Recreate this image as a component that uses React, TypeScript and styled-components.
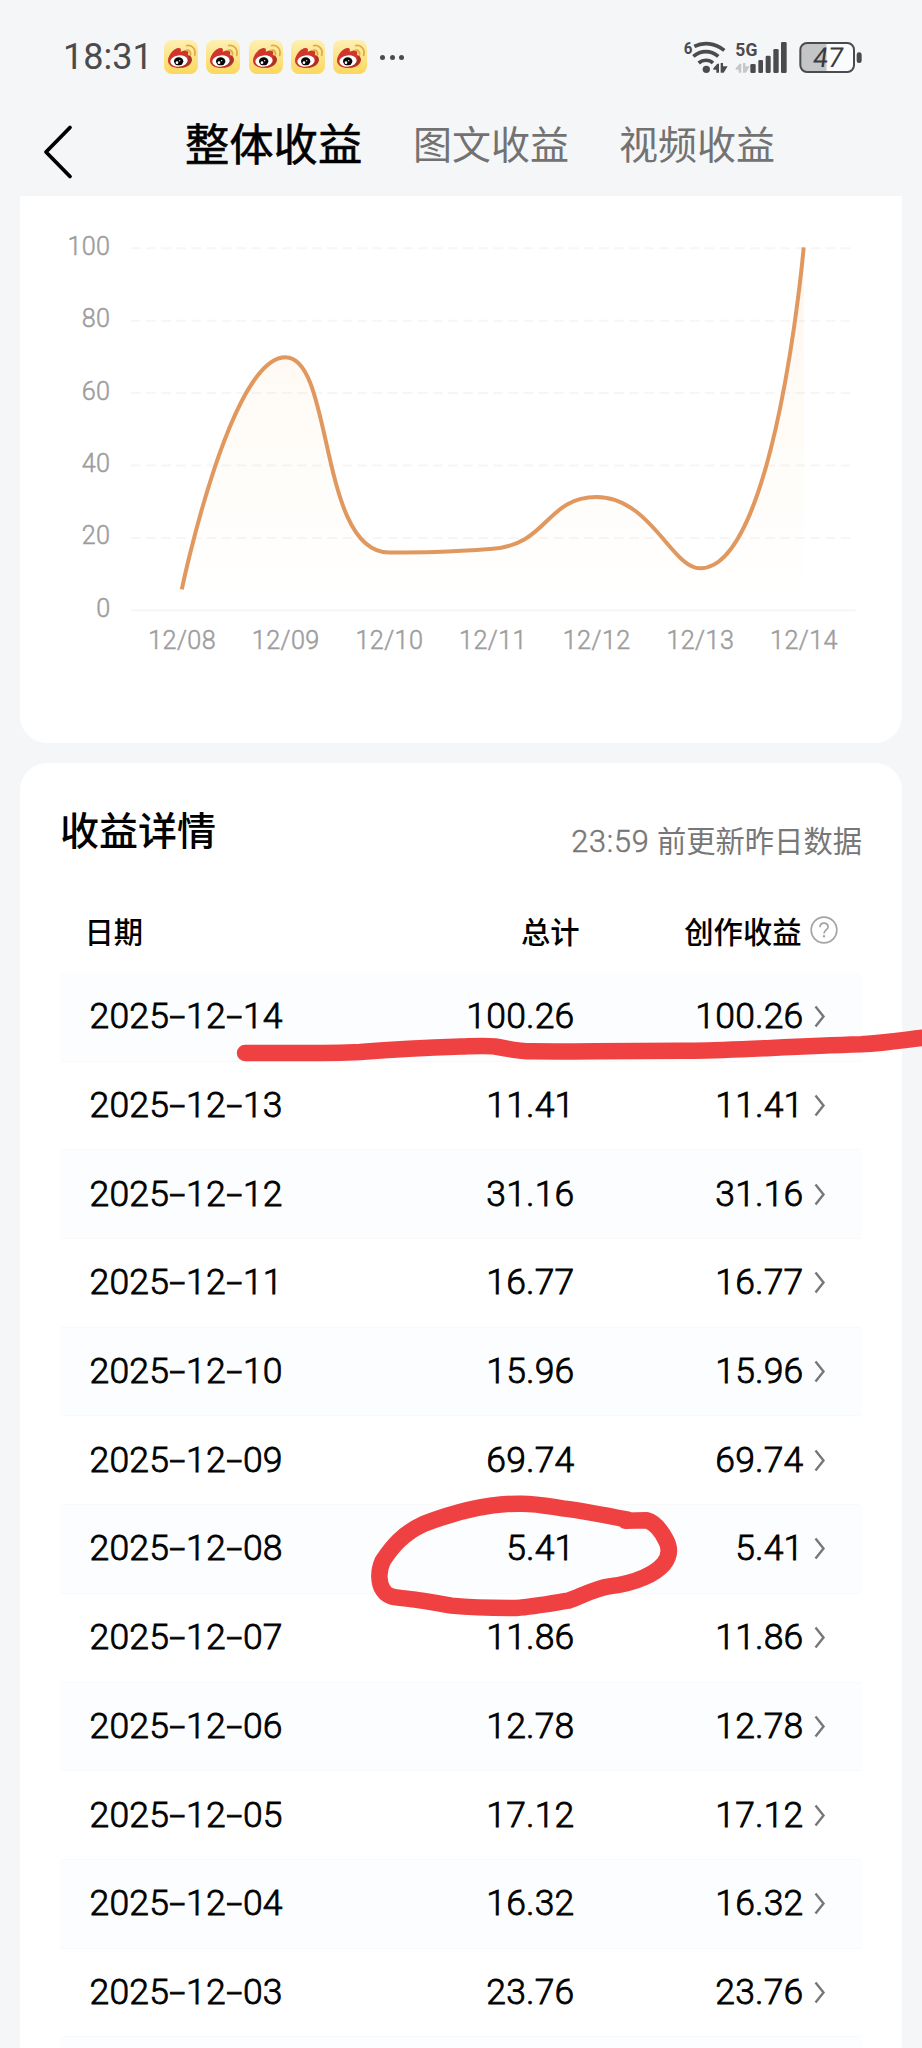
import React from 'react';
import styled, { createGlobalStyle, css } from 'styled-components';

const GlobalStyle = createGlobalStyle`
  html, body { margin: 0; padding: 0; background: #f5f6f8; }
  * { box-sizing: border-box; }
`;

const Page = styled.div`
  position: relative;
  width: 922px;
  height: 2048px;
  overflow: hidden;
  background: #f5f6f8;
  color: #000;
  font-family: Roboto, 'Noto Sans CJK SC', sans-serif;
`;

const StatusBar = styled.header`
  display: flex;
  align-items: center;
  height: 92px;
  padding: 22px 59px 0 63px;
`;

const Clock = styled.span`
  width: 101px;
  font-size: 36px;
  line-height: 40px;
  color: #4b4b4d;
  white-space: nowrap;
`;

const Notifications = styled.div`
  display: flex;
  align-items: center;
  gap: 8.3px;
`;

const MoreDots = styled.div`
  display: flex;
  gap: 4.6px;
  margin-left: 13px;
  span { width: 5px; height: 5px; border-radius: 50%; background: #4b4b4d; }
`;

const Indicators = styled.svg`
  display: block;
  margin-left: auto;
`;

const NavBar = styled.nav`
  display: flex;
  align-items: center;
  height: 104px;
  padding: 0 0 0 40px;
`;

const BackButton = styled.button`
  display: flex;
  padding: 16px 0 0;
  width: 145px;
  border: 0;
  background: none;
`;

const Tab = styled.span<{ $active?: boolean }>`
  white-space: nowrap;
  line-height: 60px;
  padding-top: 3px;
  ${(p) =>
    p.$active
      ? css`font-size: 44.3px; -webkit-text-stroke: 0.6px #000; color: #000; width: 228px; padding-top: 4px;`
      : css`font-size: 39px; color: #727272; width: 206px;`}
`;

const Card = styled.section<{ $attached?: boolean }>`
  margin: 0 20px;
  background: #fff;
  border-radius: ${(p) => (p.$attached ? '0 0 27px 27px' : '27px 27px 0 0')};
`;

const ChartCard = styled(Card)`
  height: 547px;
  margin-bottom: 20px;
`;

const ChartSvg = styled.svg`
  display: block;
  font-family: Roboto, sans-serif;
  font-size: 25.2px;
  font-weight: 300;
  fill: #9d9d9d;
  text { stroke: #9d9d9d; stroke-width: 0.5px; letter-spacing: 0.4px; }
`;

const DetailCard = styled(Card)`
  height: 1300px;
  padding: 0 40px;
`;

const DetailHead = styled.div`
  display: flex;
  justify-content: space-between;
  height: 125px;
  padding-top: 41px;
`;

const Title = styled.h2`
  margin: 0;
  font-size: 39px;
  font-weight: 500;
  line-height: 56px;
`;

const UpdateNote = styled.span`
  padding-top: 18px;
  font-size: 29.3px;
  line-height: 40px;
  color: #777;
`;

const UpdateTime = styled.span`
  font-size: 30.6px;
  font-weight: 300;
  letter-spacing: 0.8px;
  -webkit-text-stroke: 0.5px #777;
`;

const rowColumns = css`
  display: grid;
  grid-template-columns: 259px 227px 229px 1fr;
  align-items: center;
  padding-left: 28.5px;
`;

const HeaderRow = styled.div`
  ${rowColumns}
  height: 85px;
  padding-bottom: 1px;
  font-size: 29.3px;
  font-weight: 500;
`;

const HeaderCell = styled.span<{ $shift?: number; $right?: boolean }>`
  text-align: ${(p) => (p.$right ? 'right' : 'left')};
  margin-left: ${(p) => (p.$right ? 0 : -4)}px;
  margin-right: ${(p) => -(p.$shift ?? 0)}px;
`;

const Row = styled.div<{ $striped: boolean }>`
  ${rowColumns}
  height: 88.7px;
  padding-bottom: 1px;
  font-size: 35.5px;
  font-weight: 300;
  letter-spacing: 0.2px;
  -webkit-text-stroke: 0.8px #000;
  border-bottom: 1px solid #f9f9fa;
  border-radius: 3px;
  background: ${(p) => (p.$striped ? '#fcfdfe' : '#fff')};
`;

const DateCell = styled.span`
  padding-left: 1px;
  white-space: nowrap;
`;

const Dash = styled.span`
  display: inline-block;
  width: 17px;
  text-align: center;
  transform: scaleX(1.6);
`;

const Amount = styled.span`
  text-align: right;
`;

const CellIcon = styled.svg`
  display: block;
  margin-left: ${(p) => p.x ?? 0}px;
`;

const Marks = styled.svg`
  position: absolute;
  left: 0;
  top: 0;
  pointer-events: none;
`;

const WeiboIcon = ({ id }: { id: string }) => (
  <svg width="34" height="34" viewBox="0 0 102 102">
    <defs>
      <linearGradient id={id} x1="0" y1="0" x2="0" y2="1">
        <stop offset="0" stopColor="#fdf0b4" />
        <stop offset="1" stopColor="#fbd75c" />
      </linearGradient>
    </defs>
    <rect width="102" height="102" rx="24" fill={`url(#${id})`} />
    <path d="M12 62C12 46 30 24 44 24C51 24 52 29 50 36C58 31 72 29 73 38C73 41 71 43 72 45C80 47 84 52 84 60C83 75 66 84 46 84C27 84 12 76 12 62Z" fill="#cf352d" />
    <path d="M74 46C83 50 85 60 79 69C73 77 62 82 50 84C66 76 76 64 74 46Z" fill="#a53327" />
    <ellipse cx="45" cy="63" rx="26" ry="17" fill="#fff" transform="rotate(-7 45 63)" />
    <ellipse cx="44" cy="64" rx="14" ry="12" fill="#060606" />
    <circle cx="39" cy="68" r="4" fill="#fff" />
    <circle cx="47" cy="62" r="2" fill="#fff" />
    <path d="M67 31C76 29 82 36 79 45M68 17C84 13 97 28 92 46" fill="none" stroke="#e0ab48" strokeWidth="5.5" strokeLinecap="round" />
  </svg>
);

const StatusIcons = () => (
  <Indicators width="180" height="36" viewBox="72 54 540 108" fontFamily="Roboto" fill="#4b4b4d">
    <text x="74" y="99" fontSize="50" fontWeight="700" textLength="26" lengthAdjust="spacingAndGlyphs">6</text>
    <g fill="none" stroke="#4b4b4d" strokeWidth="11">
      <path d="M106 76C134 62 168 66 196 88" />
      <path d="M103 106C126 87 155 87 178 106" />
      <path d="M119 126C132 115 150 115 162 126" />
    </g>
    <circle cx="142" cy="145" r="11" />
    <path d="M163 142L175 128H180V155H172V146H163ZM185 126H192V136H206L194 155H185Z" />
    <text x="229" y="106" fontSize="54" fontWeight="700" textLength="66" lengthAdjust="spacingAndGlyphs">5G</text>
    <path d="M230 142L242 128H247V155H239V146H230ZM252 126H259V136H272L261 155H252Z" fill="#c6c7c9" />
    <rect x="274" y="129" width="16" height="27" rx="4" />
    <rect x="298" y="117" width="14" height="39" rx="4" />
    <rect x="320" y="104" width="15" height="52" rx="4" />
    <rect x="343" y="84" width="16" height="72" rx="4" />
    <rect x="366" y="63" width="17" height="93" rx="4" />
    <path d="M503 67H443Q425 67 425 85V134Q425 152 443 152H503Z" fill="#c4c5c7" />
    <path d="M503 67H565Q583 67 583 85V134Q583 152 565 152H503Z" fill="#fafbfc" />
    <rect x="424" y="66" width="161" height="87" rx="20" fill="none" stroke="#4b4b4d" strokeWidth="6" />
    <rect x="593" y="94" width="15" height="32" rx="7" />
    <text x="458" y="137" fontSize="82" fill="#3b3b3d" transform="translate(20 0) skewX(-8)" textLength="90" lengthAdjust="spacingAndGlyphs">47</text>
  </Indicators>
);

const SERIES = [
  { day: '12/08', value: 5.8 },
  { day: '12/09', value: 69.9 },
  { day: '12/10', value: 15.96 },
  { day: '12/11', value: 16.97 },
  { day: '12/12', value: 31.3 },
  { day: '12/13', value: 11.6 },
  { day: '12/14', value: 100.26 },
];

const PLOT = { left: 110, right: 835.5, top: 52.3, bottom: 414.3 };
const BAND = (PLOT.right - PLOT.left) / SERIES.length;
const yOf = (v: number) => PLOT.bottom - (v * (PLOT.bottom - PLOT.top)) / 100;
const clamp = (v: number, a: number, b: number) =>
  Math.max(Math.min(v, Math.max(a, b)), Math.min(a, b));

/* Smooth curve whose control points never leave the range of adjacent values. */
function smoothPath(pts: [number, number][], smooth = 0.5) {
  let d = `M${pts[0][0]} ${pts[0][1]}`;
  let [cx, cy] = pts[0];
  for (let i = 1; i < pts.length; i++) {
    const [x, y] = pts[i];
    const [px, py] = pts[i - 1];
    if (i === pts.length - 1) {
      d += `C${cx} ${cy} ${x} ${y} ${x} ${y}`;
      break;
    }
    const [nx, ny] = pts[i + 1];
    const prevLen = Math.hypot(x - px, y - py);
    const nextLen = Math.hypot(nx - x, ny - y);
    const ratio = (smooth * nextLen) / (nextLen + prevLen);
    const ax = clamp(x + (nx - px) * ratio, x, nx);
    const ay = clamp(y + (ny - py) * ratio, y, ny);
    const bx = clamp(x - ((ax - x) * prevLen) / nextLen, px, x);
    const by = clamp(y - ((ay - y) * prevLen) / nextLen, py, y);
    d += `C${cx} ${cy} ${bx} ${by} ${x} ${y}`;
    cx = x + ((x - bx) * nextLen) / prevLen;
    cy = y + ((y - by) * nextLen) / prevLen;
  }
  return d;
}

const points = SERIES.map(
  (s, i) => [PLOT.left + BAND * (i + 0.5), yOf(s.value)] as [number, number],
);
const linePath = smoothPath(points);

const IncomeChart = () => (
  <ChartSvg width="882" height="480" viewBox="0 0 882 480">
    <defs>
      <linearGradient id="area" x1="0" y1="50" x2="0" y2="414" gradientUnits="userSpaceOnUse">
        <stop offset="0" stopColor="#f39a54" stopOpacity="0.11" />
        <stop offset="0.4" stopColor="#f6b45c" stopOpacity="0.06" />
        <stop offset="1" stopColor="#f6c46c" stopOpacity="0" />
      </linearGradient>
      <clipPath id="plot"><rect x="100" y="50" width="750" height="370" /></clipPath>
    </defs>
    {[100, 80, 60, 40, 20, 0].map((tick) => (
      <g key={tick}>
        <text x="90.500" y={yOf(tick) + 6.5} textAnchor="end">{tick}</text>
        <line
          x1={PLOT.left + 1} x2={PLOT.right} y1={yOf(tick)} y2={yOf(tick)}
          stroke="#f6f6f6" strokeWidth="2" strokeDasharray={tick ? '9.6 5.5' : undefined}
        />
      </g>
    ))}
    <g clipPath="url(#plot)">
      <path d={`${linePath}L${points[6][0]} ${PLOT.bottom}L${points[0][0]} ${PLOT.bottom}Z`} fill="url(#area)" />
      <path d={linePath} fill="none" stroke="#e0985f" strokeWidth="4" />
    </g>
    {SERIES.map((s, i) => (
      <text key={s.day} x={points[i][0] + 0.3} y="452.5" textAnchor="middle">{s.day}</text>
    ))}
  </ChartSvg>
);

const RECORDS: [string, string][] = [
  ['2025-12-14', '100.26'],
  ['2025-12-13', '11.41'],
  ['2025-12-12', '31.16'],
  ['2025-12-11', '16.77'],
  ['2025-12-10', '15.96'],
  ['2025-12-09', '69.74'],
  ['2025-12-08', '5.41'],
  ['2025-12-07', '11.86'],
  ['2025-12-06', '12.78'],
  ['2025-12-05', '17.12'],
  ['2025-12-04', '16.32'],
  ['2025-12-03', '23.76'],
];

const DateText = ({ value }: { value: string }) => {
  const [y, m, d] = value.split('-');
  return <DateCell>{y}<Dash>-</Dash>{m}<Dash>-</Dash>{d}</DateCell>;
};

export default function App() {
  return (
    <Page>
      <GlobalStyle />
      <StatusBar>
        <Clock>18:31</Clock>
        <Notifications>
          {['a', 'b', 'c', 'd', 'e'].map((k) => <WeiboIcon key={k} id={`weibo-${k}`} />)}
        </Notifications>
        <MoreDots><span /><span /><span /></MoreDots>
        <StatusIcons />
      </StatusBar>
      <NavBar>
        <BackButton aria-label="返回">
          <svg width="36" height="56" viewBox="0 0 36 56" fill="none" stroke="#000" strokeWidth="3.8" strokeLinecap="round" strokeLinejoin="round">
            <path d="M30 3.5L6 28L30 52.5" />
          </svg>
        </BackButton>
        <Tab $active>整体收益</Tab>
        <Tab>图文收益</Tab>
        <Tab>视频收益</Tab>
      </NavBar>
      <ChartCard $attached><IncomeChart /></ChartCard>
      <DetailCard>
        <DetailHead>
          <Title>收益详情</Title>
          <UpdateNote><UpdateTime>23:59</UpdateTime> 前更新昨日数据</UpdateNote>
        </DetailHead>
        <HeaderRow>
          <HeaderCell>日期</HeaderCell>
          <HeaderCell $right $shift={5}>总计</HeaderCell>
          <HeaderCell $right $shift={-2}>创作收益</HeaderCell>
          <CellIcon x={6} width="28" height="28" viewBox="0 0 28 28" fill="none" stroke="#a3a3a3" strokeWidth="1.7">
            <circle cx="14" cy="14" r="12.8" />
            <path d="M10 11.2C10 5.6 18.1 5.8 18.1 10.9C18.1 14 14 13.8 14 17.4" />
            <path d="M14 19.2V21.4" strokeWidth="2.2" />
          </CellIcon>
        </HeaderRow>
        {RECORDS.map(([date, amount], i) => (
          <Row key={date} $striped={i % 2 === 0}>
            <DateText value={date} />
            <Amount>{amount}</Amount>
            <Amount>{amount}</Amount>
            <CellIcon x={10} width="12" height="24" viewBox="0 0 12 24" fill="none" stroke="#777" strokeWidth="2.4">
              <path d="M1.500 2.500L9.500 12.500L1.500 22.500" />
            </CellIcon>
          </Row>
        ))}
        <Row $striped />
      </DetailCard>
      <Marks width="922" height="2048" viewBox="0 0 922 2048" fill="none" stroke="#f04142" strokeWidth="16.5" strokeLinecap="round" strokeLinejoin="round">
        <path d="M245 1053C290 1053 330 1053.500 360 1052C390 1049.500 410 1048 461 1046.500C478 1046 486 1045.500 495 1046.500C508 1048.500 517 1051.300 532 1051.300C580 1052 600 1050.500 694 1050.700C740 1050 780 1047 861 1044.300C890 1042.500 906 1039.500 930 1037" />
        <path
          transform="translate(340 1460) scale(0.3712 0.3333)"
          vectorEffect="non-scaling-stroke"
          d="M775 179C700 162 650 152 600 145C560 138 530 131 490 131C390 129 300 160 225 192C170 220 140 260 115 303C102 335 104 370 116 390C130 414 150 412 180 416C220 421 260 429 300 437C340 441 400 444 475 444C520 440 570 430 615 422C650 408 690 384 725 379C800 370 850 340 872 312C888 290 890 265 878 240C865 212 850 188 826 181L768 182"
        />
      </Marks>
    </Page>
  );
}
